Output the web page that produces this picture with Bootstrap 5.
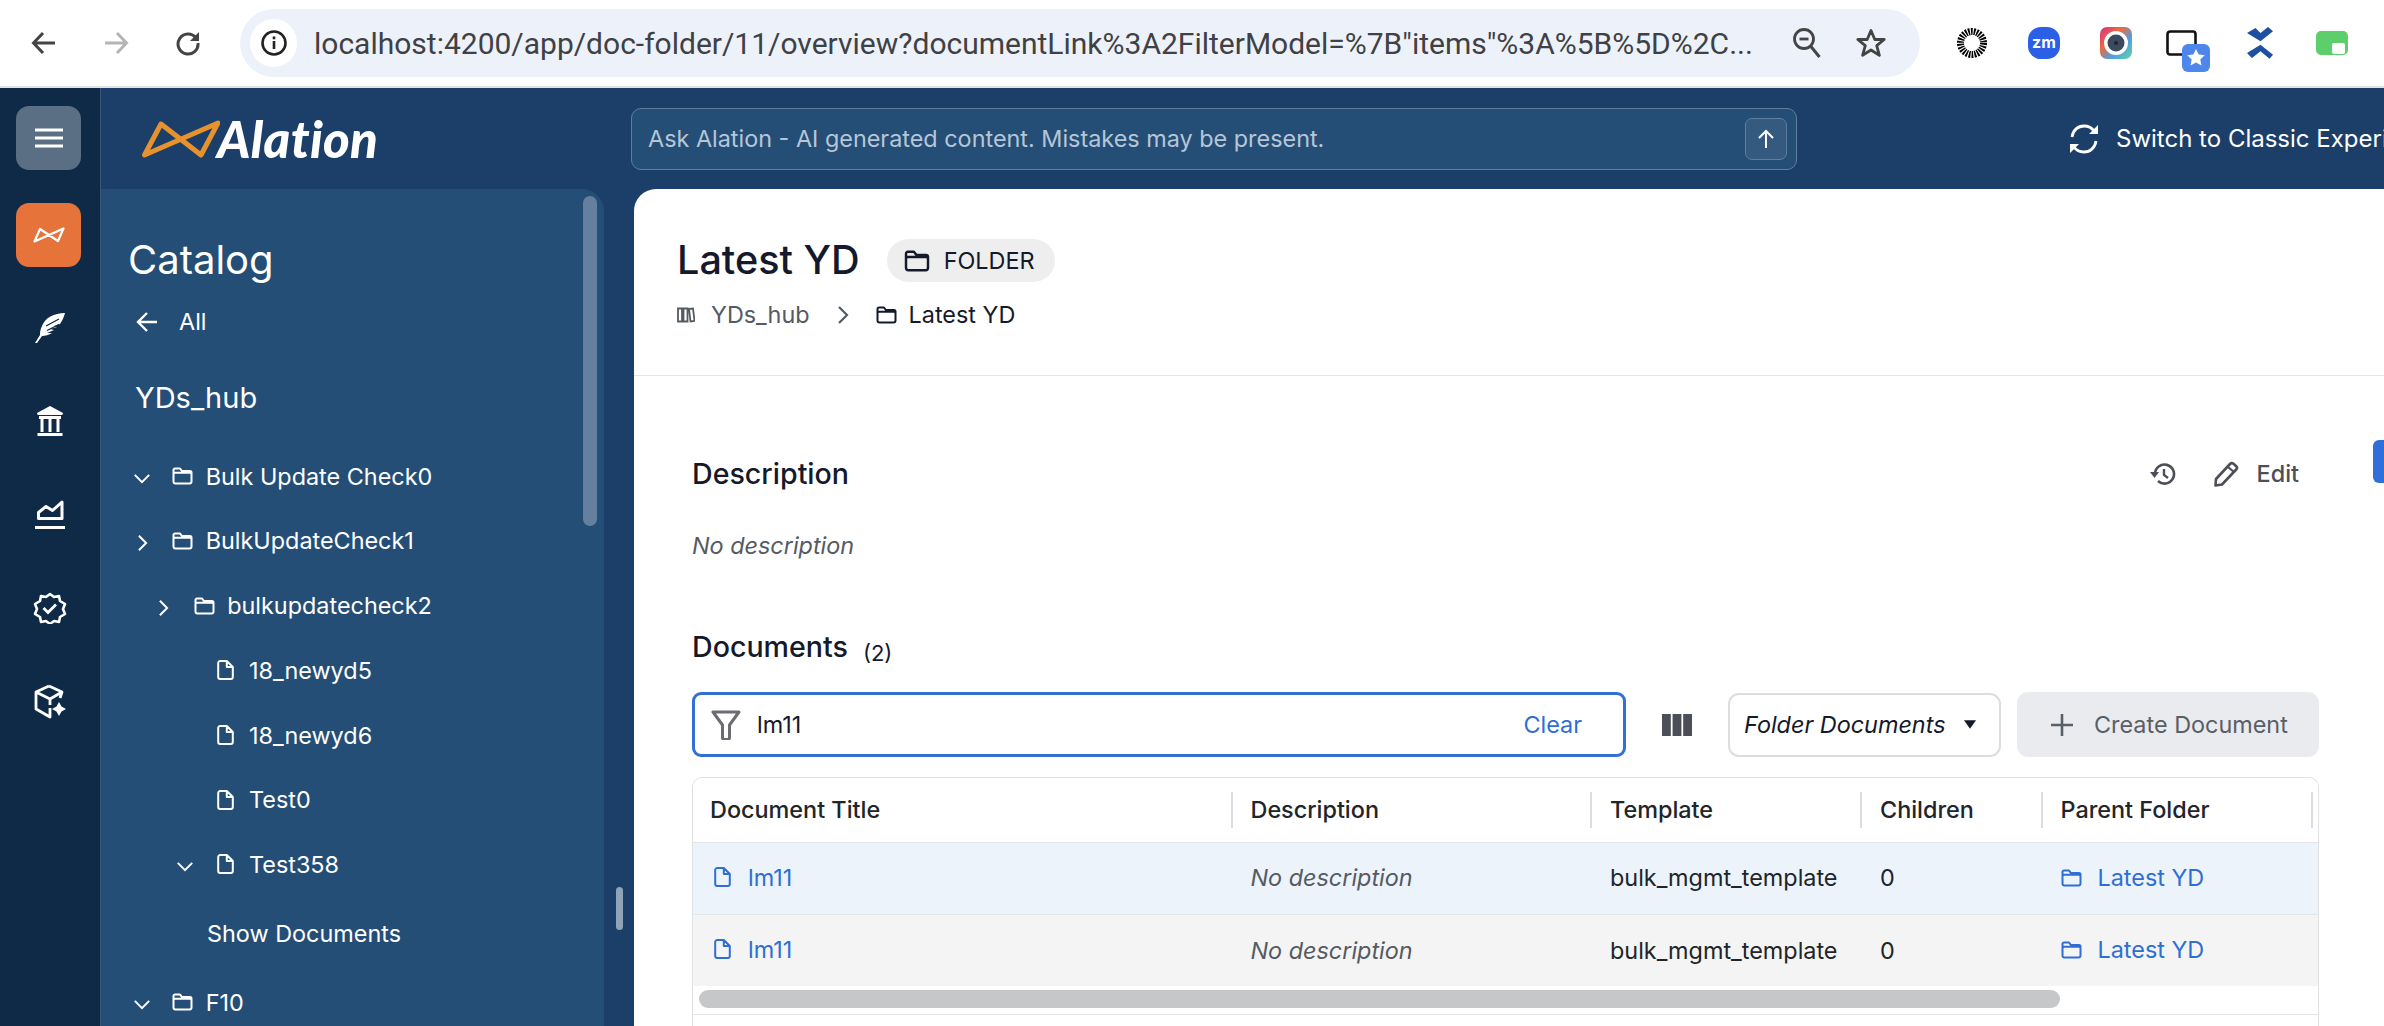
<!DOCTYPE html>
<html lang="en"><head><meta charset="utf-8"><title>Latest YD</title>
<link href="https://cdn.jsdelivr.net/npm/bootstrap@5.3.0/dist/css/bootstrap.min.css" rel="stylesheet">
<style>
html,body{height:100%;overflow:hidden;background:#fff}
body{font-family:Inter,"Liberation Sans",sans-serif;color:#14192b;width:2384px;height:1026px}
.tb{height:88px;border-bottom:2px solid #dfe3e1;background:#fff;padding-left:8px}
.tbn{width:72px;height:86px}
.addr{width:1680px;height:68px;margin:0 16px 0 16px;background:#edf2fa;border-radius:34px;padding:0 16px 0 10px;flex:none}
.infoc{width:47px;height:48px;border-radius:50%;background:#fff;margin-right:17px;flex:none}
.url{font-family:Roboto,sans-serif;font-size:30px;color:#3f4145;white-space:nowrap;width:1461px;flex:none}
.adi{width:64px;height:50px;flex:none}
.ext{width:72px;height:86px;flex:none;position:relative}
.zmt{font-family:Inter,sans-serif;font-weight:700;font-size:16px;fill:#fff}
.app{height:938px}
.rail{width:101px;background:#0f2a47;border-right:1px solid #3a5675;padding-top:18px;flex:none}
.rb{width:65px;height:64px;border-radius:13px;margin-left:16px}
.rb1{background:#5a6e84}
.rb2{background:#e5733a;margin-top:33px;margin-bottom:14px}
.ri{width:100px;height:93.5px}
.maincol{background:#1b3f69;flex:1;min-width:0}
.hdr{height:101px}
.logo{width:530px;padding-left:41px;flex:none}
.wordm{font-family:Lato,sans-serif;font-weight:900;font-style:italic;font-size:51px;color:#fff;line-height:1;letter-spacing:.3px;margin-left:-3px}
.ask{width:1166px;height:62px;background:#244e76;border:1px solid #5f7f9f;border-radius:10px;padding:0 9px 0 16px;flex:none;color:#b6c6d8;font-size:23.4px;margin-top:1px}
.upb{width:42px;height:42px;background:#355a80;border:1px solid #5f7f9f;border-radius:7px}
.swi{margin-left:271px;color:#fff;font-size:24px;white-space:nowrap;gap:16px;flex:none;font-weight:400}
.lower{height:837px;position:relative}
.side{width:503px;background:#244e76;border-top-right-radius:22px;color:#fff;padding-top:47px;flex:none;overflow:hidden}
.cat{font-size:40px;line-height:48px;padding-left:27px}
.allr{height:30px;margin-top:23px;padding-left:35px;font-size:23.4px;gap:22px}
.hub{font-size:29px;line-height:36px;margin-top:43px;margin-bottom:28px;padding-left:34px}
.tr{height:64.7px;font-size:23.4px;white-space:nowrap}
.l1{padding-left:31px}.l2{padding-left:52.5px}.l3{padding-left:73.500px}
.chv{width:20px;flex:none;margin-right:20px}
.chd{margin-right:22.5px}
.fi{margin-right:12.7px;flex:none}
.di{margin-right:15px;flex:none}
.showd{height:73px;padding-left:106px;font-size:23.4px}
.sb1{position:absolute;left:482px;top:7px;width:14px;height:330px;border-radius:7px;background:#64809e}
.sb2{position:absolute;left:515px;top:698px;width:7px;height:43px;border-radius:4px;background:#8fa3b9}
.panel{margin-left:30px;flex:1;min-width:0;background:#fff;border-top-left-radius:22px;overflow:hidden;position:relative}
.phead{height:187px;border-bottom:1px solid #e3e5e8;padding:50px 0 0 43px}
.ttl{font-size:39.6px;line-height:43px;font-weight:500;gap:27px}
.chip{height:43px;padding:0 20px 0 17px;background:#eee;border-radius:22px;font-size:23.4px;font-weight:400;gap:14px}
.crumb{height:30px;margin-top:18px;font-size:23.4px;color:#14192b}
.crm1{color:#555a63}
.crch{color:#555a63;margin:0 27px}
.pbody{padding:76px 65px 0 58px}
.h2r{height:44px;font-size:28.6px;font-weight:500}
.edit{color:#4c4f57;font-size:23.4px;gap:18px;margin-right:20px}
.hist{margin-right:19px}
.nodesc{font-size:23.4px;font-style:italic;color:#555a63;line-height:30px;margin-top:35px}
.docr{height:40px;margin-top:66px;font-size:28.6px;font-weight:500;gap:15px}
.cnt{font-size:22px;font-weight:400;margin-top:12px}
.filtr{margin-top:25px;height:65px}
.finput{width:934px;height:65px;border:3px solid #3370d6;border-radius:9px;padding:0 40px 0 16px;font-size:23.4px;flex:none}
.clr{color:#2f6fd4;margin-left:auto;margin-right:1px}
.cols{width:102px;flex:none}
.sel{width:273px;height:64px;border:2px solid #ddd;border-radius:11px;padding:0 23px 0 14px;font-style:italic;font-size:23.4px;flex:none}
.cre{width:302px;height:65px;margin-left:16px;background:#e9ebef;border:0;border-radius:11px;color:#5a5e66;font-size:23.4px;gap:20px;flex:none;padding:0 0 0 33px}
.twrap{margin-top:20px;border:1px solid #dfe1e5;border-bottom:0;border-radius:10px 10px 0 0;overflow:hidden;width:1627px;height:280px}
.dtb{table-layout:fixed;width:1625px;margin:0;font-size:23.4px}
.dtb th{padding:0;height:64px;vertical-align:middle;font-weight:500;background:#fff;border-bottom:1px solid #e3e5e8;box-shadow:none}
.hc{height:36px;line-height:36px;padding-left:17px;border-right:2px solid #d9dce0;white-space:nowrap}
.dtb th+th .hc{padding-left:18px}
.dtb td{padding:0 0 0 18px;height:72px;vertical-align:middle;white-space:nowrap;border:0;box-shadow:none}
.dtb td:first-child{padding-left:17px}
.rw1 td{background:#ecf3fb;border-bottom:1px solid #e3e5e8}
.rw2 td{background:#f4f4f4}
.lk{color:#2f6fd4;text-decoration:none;gap:17px}
.lk2{gap:16px}
.em{font-style:italic;color:#555a63}
.hs{height:29px;border-bottom:1px solid #e3e5e8;padding:4px 0 0 6px;background:#fff}
.thumb{width:1361px;height:18px;border-radius:9px;background:#c6c7c9}
.bluetab{position:absolute;left:1739px;top:251px;width:12px;height:43px;background:#2f6fdb;border-radius:6px 0 0 6px}
</style></head><body>
<svg width="0" height="0" class="position-absolute"><defs>
<symbol id="fo" viewBox="0 0 21 18"><path d="M1.5 7V3a1.5 1.5 0 0 1 1.5-1.5h5l2 2.6h8a1.5 1.5 0 0 1 1.5 1.5V7M1.5 7.2a1.5 1.5 0 0 1 1.5-1.5h15a1.5 1.5 0 0 1 1.5 1.5v7.3a2 2 0 0 1-2 2h-14a2 2 0 0 1-2-2z" fill="none" stroke="currentColor" stroke-width="2" stroke-linejoin="round"/></symbol>
<symbol id="do" viewBox="0 0 17 20"><path d="M1.2 3a2 2 0 0 1 2-2h6.6l6 6v10a2 2 0 0 1-2 2H3.2a2 2 0 0 1-2-2zM9.8 1v6h6" fill="none" stroke="currentColor" stroke-width="2" stroke-linejoin="round"/></symbol>
<symbol id="cd" viewBox="0 0 20 12"><path d="M2 2l8 8 8-8" fill="none" stroke="currentColor" stroke-width="2.2"/></symbol>
<symbol id="cr" viewBox="0 0 12 20"><path d="M2 2l8 8-8 8" fill="none" stroke="currentColor" stroke-width="2.2"/></symbol>
</defs></svg>

<div class="tb d-flex align-items-center">
 <div class="tbn d-flex align-items-center justify-content-center"><svg width="26" height="26" viewBox="0 0 26 26"><path d="M24 13H3M12 3L2.500 13 12 23" fill="none" stroke="#444" stroke-width="3"/></svg></div>
 <div class="tbn d-flex align-items-center justify-content-center"><svg width="26" height="26" viewBox="0 0 26 26"><path d="M2 13h21M14 3l9.500 10L14 23" fill="none" stroke="#b5b5b5" stroke-width="3"/></svg></div>
 <div class="tbn d-flex align-items-center justify-content-center"><svg width="26" height="26" viewBox="0 0 26 26"><path d="M21 8A10 10 0 1 0 23 13" fill="none" stroke="#444" stroke-width="3"/><path d="M24 2v9h-9z" fill="#444"/></svg></div>
 <div class="addr d-flex align-items-center">
  <div class="infoc d-flex align-items-center justify-content-center"><svg width="26" height="26" viewBox="0 0 26 26"><circle cx="13" cy="13" r="11.500" fill="none" stroke="#222" stroke-width="2.600"/><rect x="11.700" y="11" width="2.600" height="8" fill="#222"/><rect x="11.700" y="6.500" width="2.600" height="2.800" fill="#222"/></svg></div>
  <div class="url overflow-hidden">localhost:4200/app/doc-folder/11/overview?documentLink%3A2FilterModel=%7B"items"%3A%5B%5D%2C...</div>
  <div class="adi d-flex align-items-center justify-content-center"><svg width="30" height="32" viewBox="0 0 30 32"><circle cx="12" cy="12" r="9.500" fill="none" stroke="#444" stroke-width="2.800"/><path d="M7.500 12h9" stroke="#444" stroke-width="2.800"/><path d="M18.500 19l9 11" stroke="#444" stroke-width="3"/></svg></div>
  <div class="adi d-flex align-items-center justify-content-center"><svg width="32" height="32" viewBox="0 0 32 32"><path d="M16 3.500l3.800 9h9.400l-7.500 6.200 2.700 9.600L16 23l-8.400 5.300 2.700-9.600-7.500-6.200h9.400z" fill="none" stroke="#444" stroke-width="2.800" stroke-linejoin="round"/></svg></div>
 </div>
 <div class="ext d-flex align-items-center justify-content-center"><svg width="32" height="32" viewBox="0 0 32 32"><circle cx="16" cy="16" r="11.500" fill="none" stroke="#000" stroke-width="7" stroke-dasharray="1.700 1.080"/></svg></div>
 <div class="ext d-flex align-items-center justify-content-center"><svg width="32" height="48" viewBox="0 0 32 48"><rect y="8" width="32" height="32" rx="13" fill="#2b5fe6" /><text x="16" y="29" text-anchor="middle" class="zmt">zm</text></svg></div>
 <div class="ext d-flex align-items-center justify-content-center"><svg width="32" height="32" viewBox="0 0 32 32"><defs><linearGradient id="cg" x1="0" y1="0" x2="1" y2="1"><stop offset="0" stop-color="#d0308f"/><stop offset=".35" stop-color="#ef6a3a"/><stop offset=".65" stop-color="#4e9fe0"/><stop offset="1" stop-color="#62d8a0"/></linearGradient></defs><rect width="32" height="32" rx="7" fill="url(#cg)"/><circle cx="16" cy="16" r="12" fill="#fff"/><circle cx="16" cy="16" r="8.500" fill="#3b4a5c"/><circle cx="16" cy="16" r="2" fill="#1c2633"/></svg></div>
 <div class="ext d-flex align-items-center justify-content-center"><svg width="44" height="42" viewBox="0 0 44 42" class="mt-3"><rect x="1.500" y="1.500" width="28" height="23" rx="2.500" fill="none" stroke="#111" stroke-width="2.600"/><rect x="16" y="14" width="28" height="28" rx="6" fill="#4f86ec"/><path d="M30 19l2.700 5.600 6 .7-4.400 4.200 1.200 6L30 32.600l-5.500 2.900 1.200-6-4.400-4.200 6-.7z" fill="#fff"/></svg></div>
 <div class="ext d-flex align-items-center justify-content-center"><svg width="26" height="32" viewBox="0 0 26 32"><path d="M8.500 1l5 5L21 0l5 4.300-12.500 10L0 6zM0 26l13.500-8.300L26 27.700l-3.500 4-9-7.400L5 31z" fill="#1f4fa0"/></svg></div>
 <div class="ext d-flex align-items-center justify-content-center"><svg width="32" height="24" viewBox="0 0 32 24"><rect width="32" height="24" rx="5" fill="#5ccf6a"/><rect x="16" y="12" width="13" height="11" rx="2" fill="#fff"/></svg></div>
</div>

<div class="app d-flex">
 <nav class="rail">
  <div class="rb rb1 d-flex align-items-center justify-content-center"><svg width="28" height="20" viewBox="0 0 28 20"><path d="M0 2h28M0 10h28M0 18h28" stroke="#fff" stroke-width="3"/></svg></div>
  <div class="rb rb2 d-flex align-items-center justify-content-center"><svg width="32" height="16" viewBox="0 0 32 16"><path d="M1.500 14.500L7 2l18 12L30.500 1.500z" fill="none" stroke="#fff" stroke-width="2.200" stroke-linejoin="round"/></svg></div>
  <div class="ri d-flex align-items-center justify-content-center"><svg width="32" height="32" viewBox="0 0 32 32"><path d="M31 1C20 1 11 6 8 14c-2 4-2 7-2 9l-5 8 2 0 5-7c3 0 7-1 10-3l-5 0 7-3-4-1 7-2-3-1 6-2c2-3 4-7 5-11z" fill="#fff"/><path d="M12 14l13-7M13 18.500l12-6" stroke="#0f2a47" stroke-width="1.300"/></svg></div>
  <div class="ri d-flex align-items-center justify-content-center"><svg width="26" height="31" viewBox="0 0 26 31"><path d="M13 0L0 7c0 1 .5 2 1.500 2h23c1 0 1.500-1 1.500-2z" fill="#fff"/><path d="M2 11.500h22M5 12v14M13 12v14M21 12v14M0.500 28.500h25" stroke="#fff" stroke-width="3" fill="none"/></svg></div>
  <div class="ri d-flex align-items-center justify-content-center"><svg width="30" height="31" viewBox="0 0 30 31"><path d="M3.500 19.500v-6L11 7.500l6.500 4L27 3v16.500z" fill="none" stroke="#fff" stroke-width="3" stroke-linejoin="round"/><path d="M0 28.500h30" stroke="#fff" stroke-width="3"/></svg></div>
  <div class="ri d-flex align-items-center justify-content-center"><svg width="34" height="32" viewBox="0 0 34 32"><path d="M17 2l4 3 5-1 1 5 5 3-2 5 2 5-5 3-1 5-5-1-4 3-4-3-5 1-1-5-5-3 2-5-2-5 5-3 1-5 5 1z" fill="none" stroke="#fff" stroke-width="2.600" stroke-linejoin="round"/><path d="M10.500 16l4.500 4.500 8-8" fill="none" stroke="#fff" stroke-width="2.800"/></svg></div>
  <div class="ri d-flex align-items-center justify-content-center"><svg width="32" height="35" viewBox="0 0 32 35"><path d="M15 2L28 8l-2 6M15 2L2 8v17l14 8v-9M2 8l14 7 12-7M16 15v6" fill="none" stroke="#fff" stroke-width="2.800" stroke-linejoin="round"/><path d="M25 18l2.500 4.500L32 25l-4.500 2.500L25 32l-2.500-4.500L18 25l4.500-2.500z" fill="#fff"/></svg></div>
 </nav>
 <div class="maincol">
  <header class="hdr d-flex align-items-center">
   <div class="logo d-flex align-items-center"><svg width="78" height="38" viewBox="0 0 78 38"><path d="M2.500 35L19 4l40 31L76 3z" fill="none" stroke="#e8922e" stroke-width="5" stroke-linejoin="round"/></svg><span class="wordm">Alation</span></div>
   <div class="ask d-flex align-items-center justify-content-between"><span>Ask Alation - AI generated content. Mistakes may be present.</span><span class="upb d-flex align-items-center justify-content-center"><svg width="18" height="20" viewBox="0 0 18 20"><path d="M9 19V2M2 9l7-7 7 7" fill="none" stroke="#fff" stroke-width="2"/></svg></span></div>
   <div class="swi d-flex align-items-center"><svg width="32" height="30" viewBox="0 0 32 30"><path d="M4 13C5 6 10 2 16 2c4 0 8 2 10 5M28 17c-1 7-6 11-12 11-4 0-8-2-10-5" fill="none" stroke="#fff" stroke-width="2.800"/><path d="M30 1v9h-9zM2 29v-9h9z" fill="#fff"/></svg><span>Switch to Classic Experience</span></div>
  </header>
  <div class="lower d-flex">
   <aside class="side">
    <div class="cat">Catalog</div>
    <div class="allr d-flex align-items-center"><svg width="21" height="22" viewBox="0 0 21 22"><path d="M21 11H2M11 2l-9 9 9 9" fill="none" stroke="#fff" stroke-width="2.400"/></svg><span>All</span></div>
    <div class="hub">YDs_hub</div>
    <div class="tr l1 d-flex align-items-center"><span class="chv text-center"><svg width="18" height="11"><use href="#cd"/></svg></span><svg class="fi" width="21" height="18"><use href="#fo"/></svg>Bulk Update Check0</div>
    <div class="tr l1 d-flex align-items-center"><span class="chv text-center"><svg width="11" height="18"><use href="#cr"/></svg></span><svg class="fi" width="21" height="18"><use href="#fo"/></svg>BulkUpdateCheck1</div>
    <div class="tr l2 d-flex align-items-center"><span class="chv text-center"><svg width="11" height="18"><use href="#cr"/></svg></span><svg class="fi" width="21" height="18"><use href="#fo"/></svg>bulkupdatecheck2</div>
    <div class="tr l3 d-flex align-items-center"><span class="chv chd"></span><svg class="di" width="17" height="20"><use href="#do"/></svg>18_newyd5</div>
    <div class="tr l3 d-flex align-items-center"><span class="chv chd"></span><svg class="di" width="17" height="20"><use href="#do"/></svg>18_newyd6</div>
    <div class="tr l3 d-flex align-items-center"><span class="chv chd"></span><svg class="di" width="17" height="20"><use href="#do"/></svg>Test0</div>
    <div class="tr l3 d-flex align-items-center"><span class="chv chd text-center"><svg width="18" height="11"><use href="#cd"/></svg></span><svg class="di" width="17" height="20"><use href="#do"/></svg>Test358</div>
    <div class="showd d-flex align-items-center">Show Documents</div>
    <div class="tr l1 d-flex align-items-center"><span class="chv text-center"><svg width="18" height="11"><use href="#cd"/></svg></span><svg class="fi" width="21" height="18"><use href="#fo"/></svg>F10</div>
   </aside>
   <div class="sb1"></div><div class="sb2"></div>
   <main class="panel">
    <div class="phead">
     <div class="ttl d-flex align-items-center"><span>Latest YD</span><span class="chip d-flex align-items-center"><svg width="26" height="22"><use href="#fo"/></svg>FOLDER</span></div>
     <div class="crumb d-flex align-items-center"><svg class="crm1" width="18" height="16" viewBox="0 0 18 16"><path d="M1 1.500h4v13H1zM6.500 1.500h4v13h-4zM12 2l4 -.5 1.500 12.500-4 .5z" fill="none" stroke="currentColor" stroke-width="1.800"/></svg><span class="crm1 ms-3">YDs_hub</span><svg class="crch" width="12" height="20"><use href="#cr"/></svg><svg width="21" height="18"><use href="#fo"/></svg><span class="ms-2 ps-1">Latest YD</span></div>
    </div>
    <div class="pbody">
     <div class="h2r d-flex align-items-center justify-content-between"><span>Description</span><span class="edit d-flex align-items-center"><svg width="26" height="24" viewBox="0 0 26 24" class="hist"><path d="M5 12a9.500 9.500 0 1 1 3 7" fill="none" stroke="#4c4f57" stroke-width="2.600"/><path d="M0 10h9l-4.500 6z" fill="#4c4f57"/><path d="M14 7v6l4 3" fill="none" stroke="#4c4f57" stroke-width="2.400"/></svg><svg width="26" height="26" viewBox="0 0 26 26"><path d="M3 18L17 3c1-1 2.500-1 3.500-.2l2.700 2.400c1 1 1 2.300 0 3.300L9 23.500l-6.500 1z" fill="none" stroke="#4c4f57" stroke-width="2.600" stroke-linejoin="round"/><path d="M15 6l6 5" stroke="#4c4f57" stroke-width="2.200"/></svg><span>Edit</span></span></div>
     <div class="nodesc">No description</div>
     <div class="docr d-flex align-items-center"><span>Documents</span><span class="cnt">(2)</span></div>
     <div class="filtr d-flex align-items-center">
      <div class="finput d-flex align-items-center"><svg width="30" height="30" viewBox="0 0 30 30" class="me-3"><path d="M2 2h26L18.500 15v12.500c0 1.500-1 2-2 2h-3c-1 0-2-.5-2-2V15z" fill="none" stroke="#6b6d72" stroke-width="3" stroke-linejoin="round"/></svg><span>lm11</span><span class="clr">Clear</span></div>
      <div class="cols d-flex align-items-center justify-content-center"><svg width="30" height="22" viewBox="0 0 30 22"><path d="M0 0h8.800v22H0zM10.600 0h8.800v22h-8.800zM21.200 0H30v22h-8.800z" fill="#4c4f57"/></svg></div>
      <div class="sel d-flex align-items-center justify-content-between"><span>Folder Documents</span><svg width="12" height="9" viewBox="0 0 14 10"><path d="M0 0h14L7 10z" fill="#14192b"/></svg></div>
      <button type="button" class="btn cre d-flex align-items-center"><svg width="24" height="24" viewBox="0 0 24 24"><path d="M12 1v22M1 12h22" stroke="#5a5e66" stroke-width="2.600"/></svg>Create Document</button>
     </div>
     <div class="twrap">
      <table class="table dtb">
       <colgroup><col style="width:539.5px"><col style="width:359.5px"><col style="width:270px"><col style="width:180.5px"><col style="width:270px"><col style="width:5.5px"></colgroup>
       <thead><tr><th><div class="hc">Document Title</div></th><th><div class="hc">Description</div></th><th><div class="hc">Template</div></th><th><div class="hc">Children</div></th><th><div class="hc">Parent Folder</div></th><th></th></tr></thead>
       <tbody>
        <tr class="rw1"><td><a class="lk d-inline-flex align-items-center" href="#"><svg width="17" height="20" class="ms-1"><use href="#do"/></svg>lm11</a></td><td class="em">No description</td><td>bulk_mgmt_template</td><td>0</td><td><a class="lk lk2 d-inline-flex align-items-center" href="#"><svg width="21" height="18"><use href="#fo"/></svg>Latest YD</a></td><td></td></tr>
        <tr class="rw2"><td><a class="lk d-inline-flex align-items-center" href="#"><svg width="17" height="20" class="ms-1"><use href="#do"/></svg>lm11</a></td><td class="em">No description</td><td>bulk_mgmt_template</td><td>0</td><td><a class="lk lk2 d-inline-flex align-items-center" href="#"><svg width="21" height="18"><use href="#fo"/></svg>Latest YD</a></td><td></td></tr>
       </tbody>
      </table>
      <div class="hs"><div class="thumb"></div></div>
     </div>
    </div>
    <div class="bluetab"></div>
   </main>
  </div>
 </div>
</div>
<script src="https://cdn.jsdelivr.net/npm/bootstrap@5.3.0/dist/js/bootstrap.bundle.min.js"></script>
</body></html>
